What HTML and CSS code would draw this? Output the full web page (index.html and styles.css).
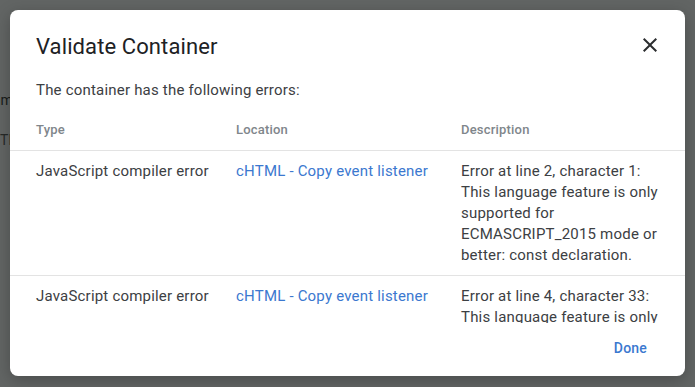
FILE: index.html
```html
<!DOCTYPE html>
<html lang="en">
<head>
<meta charset="utf-8">
<title>Validate Container</title>
<link rel="stylesheet" href="styles.css">
</head>
<body>
<div class="page">
  <div class="page-topbar"></div>
  <div class="page-row page-row-head"><span class="page-cell">Name</span></div>
  <div class="page-row page-row-dim"><span class="page-cell">cHTML</span></div>
</div>
<div class="scrim"></div>
<div class="dialog" role="dialog" aria-labelledby="dlg-title">
  <div class="dialog-header">
    <h2 class="dialog-title" id="dlg-title">Validate Container</h2>
    <button class="close-btn" aria-label="Close">
      <svg class="close-icon" viewBox="0 0 24 24" width="24" height="24"><path d="M19 6.41L17.59 5 12 10.59 6.41 5 5 6.41 10.59 12 5 17.59 6.41 19 12 13.41 17.59 19 19 17.59 13.41 12z"/></svg>
    </button>
  </div>
  <p class="dialog-intro">The container has the following errors:</p>
  <div class="dialog-body">
    <div class="err-table">
      <div class="cell head first">Type</div>
      <div class="cell head">Location</div>
      <div class="cell head last">Description</div>

      <div class="cell first">JavaScript compiler error</div>
      <div class="cell"><a class="loc-link" href="#">cHTML - Copy event listener</a></div>
      <div class="cell last">Error at line 2, character 1: This language feature is only supported for ECMASCRIPT_2015 mode or better: const declaration.</div>

      <div class="cell first">JavaScript compiler error</div>
      <div class="cell"><a class="loc-link" href="#">cHTML - Copy event listener</a></div>
      <div class="cell last">Error at line 4, character 33: This language feature is only supported for ECMASCRIPT_2015 mode or better: let declaration.</div>
    </div>
  </div>
  <div class="dialog-footer">
    <button class="done-btn">Done</button>
  </div>
</div>
</body>
</html>
```
FILE: styles.css
```css
html, body {
  margin: 0;
  height: 100%;
}
body {
  background: #ffffff;
  font-family: Roboto, "Liberation Sans", Arial, sans-serif;
  overflow: hidden;
  position: relative;
}
.page {
  display: flex;
  flex-direction: column;
  margin-left: -17px;
}
.page-topbar {
  height: 80px;
}
.page-row {
  height: 40px;
  display: flex;
  align-items: center;
  font-size: 14px;
  color: #000000;
}
.page-row-dim {
  color: #333333;
}
.scrim {
  position: absolute;
  inset: 0;
  background: rgba(34, 38, 36, 0.71);
}
.dialog {
  position: absolute;
  left: 10px;
  top: 10px;
  width: 675px;
  height: 366px;
  background: #fff;
  border-radius: 8px;
  box-shadow: 0 4px 16px rgba(0,0,0,0.25);
  display: flex;
  flex-direction: column;
  overflow: hidden;
  box-sizing: border-box;
  padding-top: 23px;
}
.dialog-header {
  display: flex;
  align-items: flex-start;
  justify-content: space-between;
  padding: 0 23px 0 26px;
}
.dialog-title {
  margin: 0;
  font-size: 22px;
  line-height: 28px;
  font-weight: 400;
  color: #202124;
  letter-spacing: 0.1px;
}
.close-btn {
  border: 0;
  background: none;
  padding: 0;
  margin-top: 0;
  width: 24px;
  height: 24px;
  cursor: pointer;
}
.close-icon {
  display: block;
  fill: #2b2d2f;
}
.dialog-intro {
  margin: 19px 0 0;
  padding: 0 26px;
  font-size: 15px;
  line-height: 20px;
  letter-spacing: 0.2px;
  color: #3c4043;
}
.dialog-body {
  flex: 1;
  min-height: 0;
  overflow: hidden;
  margin-top: 20px;
}
.err-table {
  display: grid;
  grid-template-columns: 226px 225px 1fr;
}
.cell {
  font-size: 15px;
  line-height: 21px;
  letter-spacing: 0.2px;
  color: #3c4043;
  padding: 10px 8px 9px 0;
  border-bottom: 1px solid #e3e3e3;
}
.cell.first {
  padding-left: 26px;
}
.cell.last {
  padding-right: 22px;
}
.cell.head {
  font-size: 13px;
  line-height: 20px;
  font-weight: 500;
  letter-spacing: 0.2px;
  color: #80868b;
  padding-top: 0;
  padding-bottom: 10px;
}
.loc-link {
  color: #3b78cf;
  text-decoration: none;
}
.dialog-footer {
  display: flex;
  justify-content: flex-end;
  padding: 7px 24px 10px;
}
.done-btn {
  border: 0;
  background: none;
  font-family: inherit;
  font-size: 14px;
  line-height: 20px;
  font-weight: 500;
  letter-spacing: 0.2px;
  color: #3b78cf;
  padding: 8px 14px;
  cursor: pointer;
}
```
